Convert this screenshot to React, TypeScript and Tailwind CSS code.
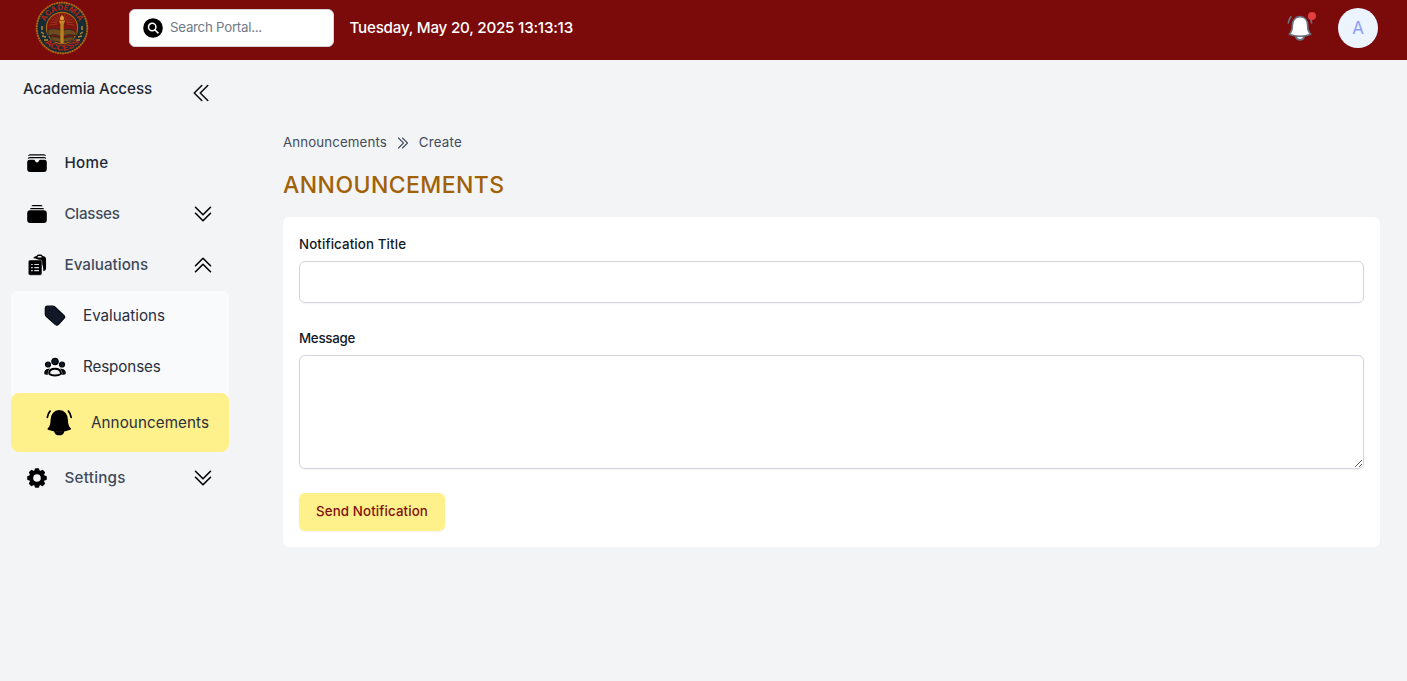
import React from "react";

function Chevrons({ dir, className }: { dir: "down" | "up" | "left" | "right"; className: string }) {
  const paths = {
    down: ["m4.5 5.25 7.5 7.5 7.5-7.5", "m4.5 11.25 7.5 7.5 7.5-7.5"],
    up: ["m4.5 18.75 7.5-7.5 7.5 7.5", "m4.5 12.75 7.5-7.5 7.5 7.5"],
    left: ["m18.75 4.5-7.5 7.5 7.5 7.5", "m12.75 4.5L5.25 12l7.5 7.5"],
    right: ["m5.25 4.5 7.5 7.5-7.5 7.5", "m11.25 4.5 7.5 7.5-7.5 7.5"],
  };
  return (
    <svg viewBox="0 0 24 24" className={className} fill="none" stroke="currentColor" strokeWidth="1.6" strokeLinecap="round" strokeLinejoin="round">
      {paths[dir].map((d) => (
        <path key={d} d={d} />
      ))}
    </svg>
  );
}

function Seal() {
  const rays = Array.from({ length: 13 }, (_, i) => Math.PI + (i * Math.PI) / 12);
  return (
    <svg viewBox="0 0 54 54" className="size-[54px]">
      <defs>
        <path id="sealTop" d="M9.2 27a17.8 17.8 0 0 1 35.6 0" />
        <path id="sealBottom" d="M4.3 27a22.7 22.7 0 0 0 45.4 0" />
      </defs>
      <circle cx="27" cy="27" r="25.3" fill="#162b33" stroke="#b3690f" strokeWidth="1.8" strokeDasharray="2 .5" />
      <circle cx="27" cy="27" r="15.6" fill="#7f1410" stroke="#b3690f" strokeWidth="1.1" />
      {rays.map((a) => (
        <path key={a} d={`M${27 + 5 * Math.cos(a)} ${23 + 5 * Math.sin(a)}L${27 + 12 * Math.cos(a)} ${24 + 12 * Math.sin(a)}`} stroke="#a8431a" strokeWidth=".7" />
      ))}
      <path d="M13 29q7-3 14 1q7-4 14 1v4q-7-3-14 1q-7-4-14-1zM15 36q6-1 12 2q6-3 12-2l-3 4q-9 3-18 0z" fill="#6d4b1c" stroke="#23282a" strokeWidth=".8" />
      <path d="M25.3 22h3.4v20h-3.4z" fill="#b88224" />
      <path d="M24 19.500h6l-.8 3h-4.400z" fill="#c48a28" />
      <path d="M27 14q3 3 1.500 5h-3q-1.500-2 1.500-5" fill="#e0a23a" />
      <path d="M6 31l3 2m-2 2l4 1m-2 3l4 0m35-8l-3 2m2 2l-4 1m2 3l-4 0M6 26h2m-2 2h2m38-2h2m-2 2h2" stroke="#b8862c" strokeWidth="1.3" />
      <text fill="#a82419" className="font-['Inter',sans-serif] text-[8px] font-extrabold">
        <textPath href="#sealTop" startOffset="50%" textAnchor="middle" textLength="43" lengthAdjust="spacingAndGlyphs">ACADEMIA</textPath>
      </text>
      <text fill="#a82419" className="font-['Inter',sans-serif] text-[8px] font-extrabold">
        <textPath href="#sealBottom" startOffset="50%" textAnchor="middle" textLength="40" lengthAdjust="spacingAndGlyphs">ACCESS</textPath>
      </text>
    </svg>
  );
}

function HomeIcon() {
  return (
    <svg viewBox="0 0 20 18" className="mb-px h-[18px] w-5">
      <path d="M1 2.200Q1.300.2 3.200.2h13.600q1.900 0 2.200 2Q18 1.500 16.800 1.500H3.200Q2 1.500 1 2.200M.7 5.200Q.8 3 3 3h14q2.200 0 2.300 2.200Q18.300 4.300 17 4.300H3Q1.700 4.300.7 5.200M2.800 5.800h4q.9 0 1.200.9.600 1.800 2 1.800t2-1.800q.3-.9 1.200-.9h4q2.600 0 2.600 2.600v6.600q0 3-3 3H3.200q-3 0-3-3V8.400q0-2.600 2.600-2.600" />
    </svg>
  );
}

function ClassesIcon() {
  return (
    <svg viewBox="0 0 20 18" className="mb-px h-[18px] w-5">
      <path d="M4.500.9Q5 .1 6 .1h8q1 0 1.500.8v.4h-11zM2.800 4.200q.4-1.200 1.700-1.200h11q1.300 0 1.700 1.200zM3.200 5.200h13.600q3 0 3 3v6.800q0 3-3 3H3.200q-3 0-3-3V8.200q0-3 3-3" />
    </svg>
  );
}

function ClipboardIcon() {
  return (
    <svg viewBox="2 1 20 23" className="mb-0.5 h-[22px] w-[19px]">
      <path fillRule="evenodd" clipRule="evenodd" d="M17.663 3.118c.225.015.45.032.673.050C19.876 3.298 21 4.604 21 6.109v9.642a3 3 0 0 1-3 3V16.500c0-5.922-4.576-10.775-10.384-11.217.324-1.132 1.300-2.010 2.548-2.114.224-.019.448-.036.673-.051A3 3 0 0 1 13.500 1.500H15a3 3 0 0 1 2.663 1.618ZM12 4.500A1.500 1.500 0 0 1 13.500 3H15a1.500 1.500 0 0 1 1.500 1.500z" />
      <path d="M4.200 7.200h10.600q1.900 0 1.900 1.900v12.300q0 1.900-1.900 1.900H4.200q-1.900 0-1.900-1.900V9.100q0-1.900 1.900-1.900" stroke="#f3f4f6" strokeWidth=".5" />
      <path d="M5.300 12h1.700M8.600 12h5M5.300 15.200h1.700M8.600 15.200h5M5.300 18.400h1.700M8.600 18.400h5" stroke="#d9dadd" strokeWidth="1.200" />
    </svg>
  );
}

function TagIcon() {
  return (
    <svg viewBox="0 0 22 22" className="mb-px size-[22px]">
      <path d="M3.500 1.200h5.300q1.200 0 2.100.8l9 8.400q1.500 1.500.1 3l-5.500 6q-1.500 1.500-3.100.2L2.200 11.400q-.9-.9-.9-2.100V3.500q0-2.300 2.200-2.300" fill="#111827" stroke="#030712" strokeWidth="1.200" />
      <circle cx="5.500" cy="5.200" r=".8" fill="#000" />
    </svg>
  );
}

function GroupIcon() {
  return (
    <svg viewBox="0 0 22 20" className="mb-px h-5 w-[22px]" stroke="#000" strokeWidth="1.2" fill="#111827">
      <circle cx="11" cy="4.500" r="3.200" />
      <circle cx="4" cy="7.500" r="2.500" />
      <circle cx="18" cy="7.500" r="2.500" />
      <path d="M1 16.800q-.8-3.800 3.600-4.500-1.800 2-1.500 4.900zM21 16.800q.8-3.800-3.600-4.500 1.800 2 1.500 4.900z" />
      <path d="M5 16.700q.2-4.900 6-4.900t6 4.900q-2.200 1.800-6 1.800t-6-1.800" fill="#f3f4f6" strokeWidth="2" />
    </svg>
  );
}

function BellIcon({ className, body, line }: { className: string; body: string; line: string }) {
  return (
    <svg viewBox="0 0 28 28" className={className} fill={body} stroke={line} strokeWidth="1.8" strokeLinecap="round" strokeLinejoin="round">
      <path d="M9.500 23.200c.5 2.100 2.200 3.500 4.500 3.500s4-1.400 4.500-3.500" />
      <path d="M2.500 20.800c2.600-2.600 3.200-5.600 3.200-9.300C5.700 5.800 8.900 1.800 14 1.800s8.300 4 8.300 9.700c0 3.700.6 6.700 3.200 9.300-3.500 1.500-7.500 2.200-11.500 2.200s-8-.7-11.500-2.200z" />
      <path d="M1.400 8.500C1.800 6 2.700 3.800 4.300 2M26.600 8.500c-.4-2.500-1.300-4.700-2.900-6.500" fill="none" />
    </svg>
  );
}

function GearIcon() {
  const teeth = [0, 45, 90, 135];
  return (
    <svg viewBox="0 0 20 20" className="size-5">
      {teeth.map((t) => (
        <rect key={t} x="7.700" y=".2" width="4.600" height="19.600" rx="1.200" transform={`rotate(${t} 10 10)`} />
      ))}
      <circle cx="10" cy="10" r="8" />
      <circle cx="10" cy="10" r="3.800" fill="#f3f4f6" />
    </svg>
  );
}

function Row({ icon, label, dir, text, arrow = "mb-px" }: { icon: React.ReactNode; label: string; dir?: "down" | "up"; text: string; arrow?: string }) {
  return (
    <a className="flex h-[51px] items-center pl-[13px] pr-[14px]">
      <span className="flex w-[26px] justify-center text-black">{icon}</span>
      <span className={`ml-[14.5px] flex-1 text-[15.2px] font-medium ${text}`}>{label}</span>
      {dir && <Chevrons dir={dir} className={`size-6 text-black ${arrow}`} />}
    </a>
  );
}

export default function App() {
  return (
    <div className="flex h-[681px] w-full flex-col overflow-hidden bg-[#f3f4f6] font-['Inter',sans-serif] text-[#1f2937]">
      <header className="flex h-[60px] shrink-0 items-center bg-[#7b0a0a] pb-1 pl-[35px] pr-[29px]">
        <Seal />
        <div className="ml-10 flex h-[38px] w-[205px] items-center rounded-md border border-[#d1d5db] bg-white pl-[13px]">
          <svg viewBox="0 0 20 20" className="size-5">
            <circle cx="10" cy="10" r="9.800" />
            <circle cx="9.200" cy="9" r="3.700" fill="none" stroke="#fff" strokeWidth="1.5" />
            <path d="m12 12 3 2.800" stroke="#fff" strokeWidth="1.6" strokeLinecap="round" />
          </svg>
          <span className="ml-[7px] text-[13.3px] tracking-[-0.26px] text-[#727987]">Search Portal...</span>
        </div>
        <time className="ml-[15.5px] text-[15.2px] font-medium tracking-[-0.23px] text-white">Tuesday, May 20, 2025 13:13:13</time>
        <div className="relative ml-auto mb-px mr-px">
          <BellIcon className="size-[26px]" body="#fff" line="#6b7280" />
          <span className="absolute -right-[3px] -top-[2.5px] size-2 rounded-full bg-[#e53e3e]" />
        </div>
        <div className="ml-6 flex size-10 items-center justify-center rounded-full bg-[#ebf4ff] pt-px text-[17px] text-[#8b9cf4]">A</div>
      </header>
      <div className="flex flex-1">
        <aside className="w-[240px] shrink-0 px-[11px]">
          <div className="flex h-[78px] items-start justify-between pl-3 pr-4 pt-[17px]">
            <h2 className="text-[15.2px] font-medium leading-6 tracking-[-0.05px]">Academia Access</h2>
            <Chevrons dir="left" className="mt-1 size-6 text-[#111]" />
          </div>
          <nav>
            <Row icon={<HomeIcon />} label="Home" text="text-[#1f2937] tracking-[0.3px]" />
            <Row icon={<ClassesIcon />} label="Classes" dir="down" text="text-[#414b5b] tracking-[-0.28px]" />
            <Row icon={<ClipboardIcon />} label="Evaluations" dir="up" text="text-[#414b5b] tracking-[0.02px]" />
            <div className="rounded-md bg-[#f9fafb] text-[15.2px] text-[#29303f]">
              <a className="flex h-[51px] items-center gap-[17px] pl-[33px]">
                <TagIcon />
                <span>Evaluations</span>
              </a>
              <a className="flex h-[51px] items-center gap-[17px] pl-[33px]">
                <GroupIcon />
                <span className="tracking-[-0.1px]">Responses</span>
              </a>
              <a className="flex h-[59px] items-center gap-[19px] rounded-lg bg-[#fef08a] pl-[34.5px]">
                <BellIcon className="mb-px h-[27px] w-[26.5px]" body="#000" line="#000" />
                <span className="pt-0.5 tracking-[0.08px]">Announcements</span>
              </a>
            </div>
            <Row icon={<GearIcon />} label="Settings" dir="down" arrow="mt-px" text="pt-0.5 text-[#414b5b] tracking-[0.25px]" />
          </nav>
        </aside>
        <main className="flex-1 pl-[43px] pr-[27px] pt-[73px]">
          <div className="flex h-5 items-center text-[13.3px] text-[#424b5a]">
            <span className="tracking-[0.11px]">Announcements</span>
            <Chevrons dir="right" className="mx-2 size-4" />
            <span className="tracking-[0.2px]">Create</span>
          </div>
          <h1 className="mt-4 text-[23px] font-medium leading-8 tracking-[0.43px] text-[#a16207]">ANNOUNCEMENTS</h1>
          <form className="mt-4 h-[330px] rounded-md bg-white p-4 text-[#111827]">
            <label htmlFor="title" className="block pt-px text-[13.3px] font-[450] leading-5 tracking-[0.12px]">Notification Title</label>
            <input id="title" className="mt-[7px] block h-[42px] w-full rounded-md border border-[#d1d5db] px-3 shadow-xs" />
            <label htmlFor="message" className="mt-[25px] block text-[13.3px] font-[450] leading-5 tracking-[-0.28px]">Message</label>
            <textarea id="message" className="mt-[7px] block h-[114px] w-full rounded-md border border-[#d1d5db] px-3 shadow-xs" />
            <button type="button" className="mt-6 block h-[38px] w-[146px] rounded-md bg-[#fef08a] pb-px text-[13.3px] font-[450] tracking-[0.13px] text-[#7f1010] shadow-xs">Send Notification</button>
          </form>
        </main>
      </div>
    </div>
  );
}
